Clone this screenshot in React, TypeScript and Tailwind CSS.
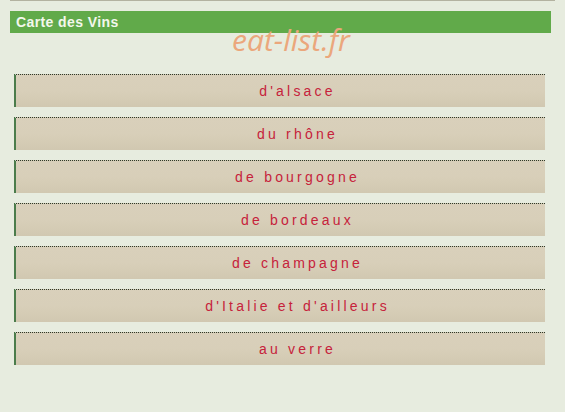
import React from "react";

const wines = [
  "d'alsace",
  "du rhône",
  "de bourgogne",
  "de bordeaux",
  "de champagne",
  "d'Italie et d'ailleurs",
  "au verre",
];

export default function App() {
  return (
    <div
      className="w-[565px] h-[412px] bg-[#e7ecdf] overflow-hidden"
      style={{ fontFamily: "Arial, 'Liberation Sans', sans-serif" }}
    >
      <div className="relative ml-[10px] w-[545px] border-t border-[#b3b2a0]">
        <div className="mt-[10px] w-[541px] h-[22px] bg-[#61aa4a] pl-[6px] flex items-center">
          <span className="text-[14px] font-bold text-[#f3f7ec] tracking-[0.4px] leading-none">
            Carte des Vins
          </span>
        </div>

        <div
          className="absolute left-[222px] top-[24px] text-[30px] italic font-normal text-[#eba77c] leading-none pointer-events-none"
          style={{ fontFamily: "'Open Sans', sans-serif" }}
        >
          eat-list.fr
        </div>

        <div className="mt-[41px] ml-[4px] flex flex-col gap-[10px] w-[531px]">
          {wines.map((w) => (
            <div
              key={w}
              className="h-[33px] border-l-2 border-l-[#4b7c4b] border-t [border-top-style:dotted] border-t-[#2f3a2a] bg-gradient-to-b from-[#d9d0bb] via-[#d8cfb9] to-[#d1c8b1] flex items-center justify-center pl-[34px]"
            >
              <span className="text-[14px] tracking-[3.2px] text-[#c6223b] leading-none">
                {w}
              </span>
            </div>
          ))}
        </div>
      </div>
    </div>
  );
}
